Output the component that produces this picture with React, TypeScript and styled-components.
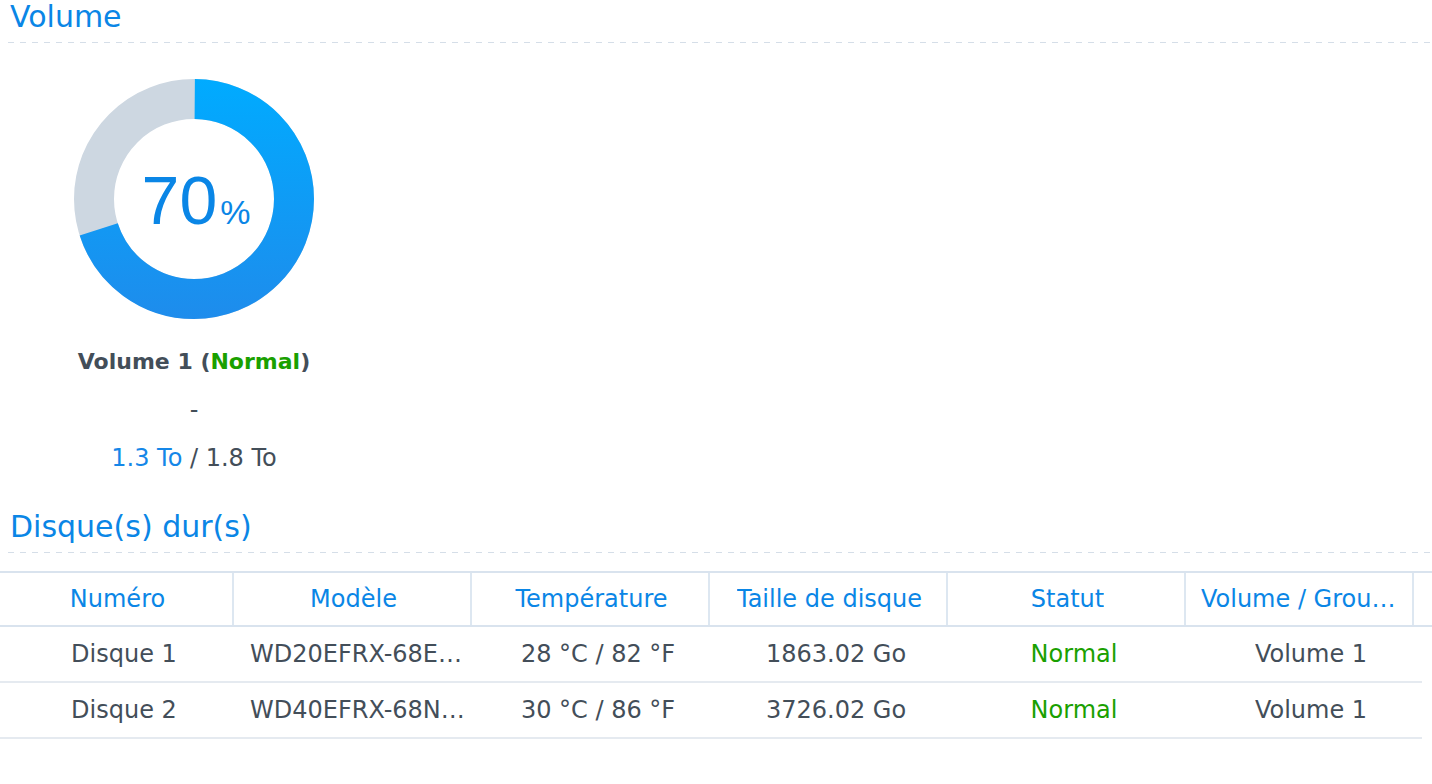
import React from "react";
import styled, { createGlobalStyle } from "styled-components";

const GlobalStyle = createGlobalStyle`
  html, body { margin: 0; padding: 0; background: #ffffff; }
  body { font-family: "DejaVu Sans", Verdana, sans-serif; color: #434e59; }
  * { box-sizing: border-box; }
`;

const Page = styled.div`
  width: 1432px;
  height: 784px;
  overflow: hidden;
  background: #ffffff;
`;

const SectionTitle = styled.div<{ $top?: number }>`
  margin-top: ${(p) => p.$top ?? 0}px;
  padding-left: 10px;
  height: 32px;
  line-height: 34px;
  font-size: 30px;
  color: #0a86e6;
  white-space: nowrap;
`;

const Divider = styled.div`
  margin: 10px 0 0 8px;
  height: 1px;
  background: repeating-linear-gradient(
    to right,
    #d5dee8 0,
    #d5dee8 6px,
    transparent 6px,
    transparent 12px
  );
`;

const VolumeCard = styled.div`
  width: 388px;
  margin-top: 36px;
  display: flex;
  flex-direction: column;
  align-items: center;
`;

const Donut = styled.div`
  width: 240px;
  height: 240px;
  display: grid;
  & > * { grid-area: 1 / 1; }
`;

const DonutLabel = styled.div`
  align-self: center;
  justify-self: center;
  display: flex;
  align-items: baseline;
  margin-left: 4px;
  margin-top: 2px;
  font-family: "Liberation Sans", Arial, sans-serif;
  color: #0a86e6;
`;

const Big = styled.span`
  font-size: 68px;
  line-height: 1;
`;

const Pct = styled.span`
  font-size: 34px;
  line-height: 1;
  margin-left: 3px;
`;

const InfoLine = styled.div<{ $bold?: boolean; $top?: number }>`
  margin-top: ${(p) => p.$top ?? 0}px;
  height: 48px;
  line-height: 48px;
  font-size: ${(p) => (p.$bold ? 22 : 24)}px;
  font-weight: ${(p) => (p.$bold ? 700 : 400)};
  color: #434e59;
  white-space: nowrap;
`;

const Green = styled.span`
  color: #1aa000;
`;

const Blue = styled.span`
  color: #1587e8;
`;

const Table = styled.div`
  margin-top: 18px;
  width: 1432px;
  font-size: 24px;
`;

const HeaderRow = styled.div`
  display: grid;
  grid-template-columns: 234px 238px 238px 238px 238px 228px 1fr;
  height: 56px;
  border-top: 2px solid #d9e3ee;
  border-bottom: 2px solid #d9e3ee;
`;

const HeaderCell = styled.div<{ $last?: boolean }>`
  display: flex;
  align-items: center;
  justify-content: center;
  padding: 0 12px 0 15px;
  border-right: ${(p) => (p.$last ? "none" : "2px solid #dde7f1")};
  color: #0a86e6;
  min-width: 0;
`;

const Ellipsis = styled.span`
  white-space: nowrap;
  overflow: hidden;
  text-overflow: ellipsis;
  min-width: 0;
  max-width: 100%;
`;

const BodyRow = styled.div`
  display: grid;
  grid-template-columns: 234px 238px 238px 238px 238px 236px;
  width: 1422px;
  height: 56px;
  border-bottom: 2px solid #e5eaf0;
`;

const BodyCell = styled.div<{ $status?: boolean }>`
  display: flex;
  align-items: center;
  justify-content: center;
  padding: 0 2px 0 16px;
  color: ${(p) => (p.$status ? "#1aa000" : "#434e59")};
  min-width: 0;
`;

const headers = [
  "Numéro",
  "Modèle",
  "Température",
  "Taille de disque",
  "Statut",
  "Volume / Groupe de stockage",
];

const disks = [
  ["Disque 1", "WD20EFRX-68EUZN0", "28 °C / 82 °F", "1863.02 Go", "Normal", "Volume 1"],
  ["Disque 2", "WD40EFRX-68N32N0", "30 °C / 86 °F", "3726.02 Go", "Normal", "Volume 1"],
];

function Ring() {
  const r = 100;
  const c = 2 * Math.PI * r;
  return (
    <svg width="240" height="240" viewBox="0 0 240 240">
      <defs>
        <linearGradient id="ringGrad" x1="0" y1="0" x2="0" y2="240" gradientUnits="userSpaceOnUse">
          <stop offset="0" stopColor="#00abff" />
          <stop offset="1" stopColor="#1e8cec" />
        </linearGradient>
      </defs>
      <circle cx="120" cy="120" r={r} fill="none" stroke="#cdd7e1" strokeWidth="40" />
      <circle
        cx="120"
        cy="120"
        r={r}
        fill="none"
        stroke="url(#ringGrad)"
        strokeWidth="40"
        strokeDasharray={`${c * 0.7} ${c * 0.3}`}
        strokeDashoffset={c * 0.25}
      />
    </svg>
  );
}

export default function App() {
  return (
    <Page>
      <GlobalStyle />
      <SectionTitle>Volume</SectionTitle>
      <Divider />
      <VolumeCard>
        <Donut>
          <Ring />
          <DonutLabel>
            <Big>70</Big>
            <Pct>%</Pct>
          </DonutLabel>
        </Donut>
        <InfoLine $bold $top={19}>
          Volume 1 (<Green>Normal</Green>)
        </InfoLine>
        <InfoLine>-</InfoLine>
        <InfoLine>
          <Blue>1.3 To</Blue> / 1.8 To
        </InfoLine>
      </VolumeCard>
      <SectionTitle $top={28}>Disque(s) dur(s)</SectionTitle>
      <Divider />
      <Table>
        <HeaderRow>
          {headers.map((h) => (
            <HeaderCell key={h}>
              <Ellipsis>{h}</Ellipsis>
            </HeaderCell>
          ))}
          <HeaderCell $last />
        </HeaderRow>
        {disks.map((row) => (
          <BodyRow key={row[0]}>
            {row.map((v, i) => (
              <BodyCell key={i} $status={i === 4}>
                <Ellipsis>{v}</Ellipsis>
              </BodyCell>
            ))}
          </BodyRow>
        ))}
      </Table>
    </Page>
  );
}
